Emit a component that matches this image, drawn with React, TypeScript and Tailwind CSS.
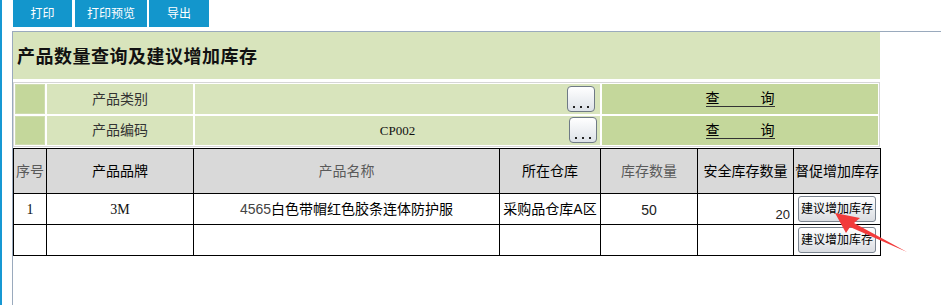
import React from 'react';

const SANS = { fontFamily: '"Liberation Sans", "Noto Sans CJK SC", sans-serif' };
const SERIF = { fontFamily: '"Liberation Serif", "Noto Sans CJK SC", serif' };

const tabs = [
  { label: '打印', w: 'w-[59px]', ml: 'ml-0' },
  { label: '打印预览', w: 'w-[72px]', ml: 'ml-[3px]' },
  { label: '导出', w: 'w-[60px]', ml: 'ml-[2px]' },
];

const PickButton: React.FC<{ className?: string }> = ({ className }) => (
  <button
    className={`w-[28px] h-[26px] rounded-[4px] border border-[#6f7a86] bg-linear-to-b from-white to-[#dde2e8] flex items-end justify-center pb-[3px] ${className || ''}`}
  >
    <span className="flex gap-[5px]">
      <span className="w-[2px] h-[2px] bg-[#222]" />
      <span className="w-[2px] h-[2px] bg-[#222]" />
      <span className="w-[2px] h-[2px] bg-[#222]" />
    </span>
  </button>
);

const QueryLink = () => (
  <span className="inline-flex items-end gap-[41px] border-b border-[#333] leading-[15px] text-[14px] text-black cursor-pointer">
    <span>查</span>
    <span>询</span>
  </span>
);

const SuggestButton = () => (
  <button className="w-[78px] h-[26px] rounded-[3px] border border-[#7c8590] bg-linear-to-b from-white to-[#dadde2] text-[12px] text-black leading-none whitespace-nowrap">
    建议增加库存
  </button>
);

const App: React.FC = () => {
  const headers = [
    { t: '序号', c: 'text-[#5a5a5a]' },
    { t: '产品品牌', c: 'text-black' },
    { t: '产品名称', c: 'text-[#5a5a5a]' },
    { t: '所在仓库', c: 'text-black' },
    { t: '库存数量', c: 'text-[#5a5a5a]' },
    { t: '安全库存数量', c: 'text-black' },
    { t: '督促增加库存', c: 'text-black' },
  ];

  return (
    <div className="relative w-[941px] h-[305px] bg-white flex overflow-hidden" style={SANS}>
      <div className="w-[2px] shrink-0 bg-[#1798d3]" />
      <div className="ml-[10px] flex-1 flex flex-col">
        {/* toolbar */}
        <div className="flex h-[27px] pl-[1px]">
          {tabs.map((t) => (
            <div
              key={t.label}
              className={`${t.w} ${t.ml} h-full bg-[#1396cc] text-white text-[12px] flex items-center justify-center`}
            >
              {t.label}
            </div>
          ))}
        </div>

        <div className="mt-[4px] flex-1 border-l border-t border-[#9aaabd]">
          {/* title */}
          <div className="w-[867px] h-[47px] bg-[#d8e4bc] flex items-center pl-[4px]">
            <h2 className="text-[18px] font-bold tracking-[0.5px] text-[#111]" style={{ fontFamily: '"Noto Sans CJK SC", sans-serif' }}>
              产品数量查询及建议增加库存
            </h2>
          </div>

          {/* query form */}
          <div className="mt-[3px] w-[867px] border border-[#d6d6d6] p-[1px] grid grid-cols-[30px_146px_405px_276px] gap-[2px]">
            <div className="h-[30px] bg-[#c4d79b] border border-[#cfdcb0]" />
            <div className="h-[30px] bg-[#d8e4bc] flex items-center justify-center text-[14px] text-[#333]">产品类别</div>
            <div className="h-[30px] bg-[#d8e4bc] flex items-center justify-end pr-[5px]">
              <PickButton />
            </div>
            <div className="h-[30px] bg-[#c4d79b] flex items-center justify-center">
              <QueryLink />
            </div>

            <div className="h-[29px] bg-[#c4d79b] border border-[#cfdcb0]" />
            <div className="h-[29px] bg-[#d8e4bc] flex items-center justify-center text-[14px] text-[#333]">产品编码</div>
            <div className="relative h-[29px] bg-[#d8e4bc] flex items-center justify-center">
              <span className="text-[13px] text-[#111]" style={SERIF}>CP002</span>
              <PickButton className="absolute right-[3px] top-[1px]" />
            </div>
            <div className="h-[29px] bg-[#c4d79b] flex items-center justify-center">
              <QueryLink />
            </div>
          </div>

          {/* results */}
          <table className="mt-[1px] w-[867px] table-fixed border-collapse text-[14px]">
            <colgroup>
              <col className="w-[33px]" />
              <col className="w-[147px]" />
              <col className="w-[306px]" />
              <col className="w-[101px]" />
              <col className="w-[97px]" />
              <col className="w-[96px]" />
              <col className="w-[87px]" />
            </colgroup>
            <thead>
              <tr className="h-[45px] bg-[#d9d9d9]">
                {headers.map((h) => (
                  <th key={h.t} className={`border border-black font-normal p-0 whitespace-nowrap ${h.c}`}>
                    {h.t}
                  </th>
                ))}
              </tr>
            </thead>
            <tbody>
              <tr className="h-[31px]">
                <td className="border border-black text-center text-[14px] text-[#111]" style={SERIF}>1</td>
                <td className="border border-black text-center text-[14px] text-[#111]" style={SERIF}>3M</td>
                <td className="border border-black text-center text-black">
                  <span className="text-[#444]">4565</span>白色带帽红色胶条连体防护服
                </td>
                <td className="border border-black text-center text-black whitespace-nowrap">采购品仓库A区</td>
                <td className="border border-black text-center align-top pt-[6px] text-[14px] text-[#222]">50</td>
                <td className="border border-black text-right align-bottom pr-[3px] pb-[1px] text-[13px] text-[#222] leading-[16px]">20</td>
                <td className="border border-black text-center p-0">
                  <SuggestButton />
                </td>
              </tr>
              <tr className="h-[31px]">
                <td className="border border-black" />
                <td className="border border-black" />
                <td className="border border-black" />
                <td className="border border-black" />
                <td className="border border-black" />
                <td className="border border-black" />
                <td className="border border-black text-center p-0">
                  <SuggestButton />
                </td>
              </tr>
            </tbody>
          </table>
        </div>
      </div>

      {/* annotation arrow */}
      <svg className="absolute left-0 top-0 pointer-events-none" width="941" height="305" viewBox="0 0 941 305">
        <polygon
          points="835,213 860,218 854,223 907,252 850,227 846,233"
          fill="#f23b3b"
        />
      </svg>
    </div>
  );
};

export default App;
